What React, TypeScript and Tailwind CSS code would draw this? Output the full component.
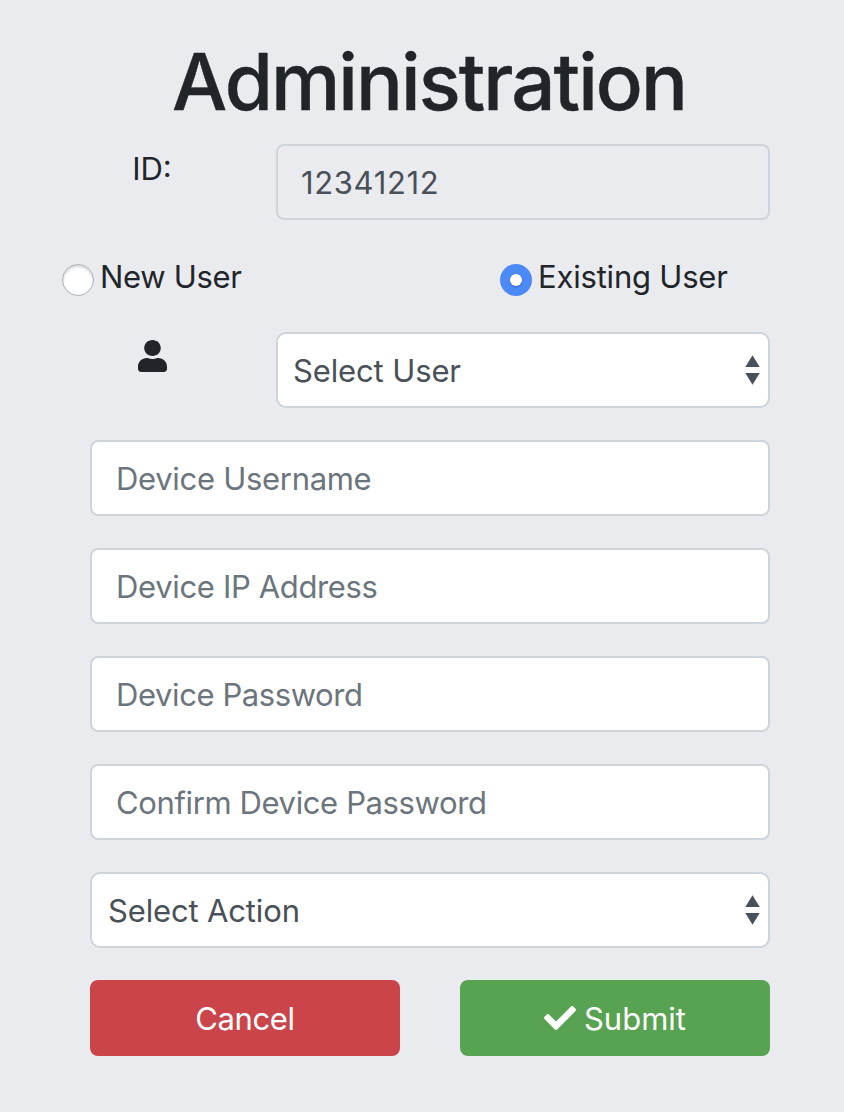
import type { InputHTMLAttributes } from 'react';
import { FaCheck, FaUser } from 'react-icons/fa';

const FIELD =
  'block h-[76px] w-full rounded-lg border-2 border-[#ced4da] px-6 pt-[1px] pb-0 text-[31px] text-[#495057] placeholder:text-[#6c757d] placeholder:opacity-100 outline-none';

function Field({ className = '', ...props }: InputHTMLAttributes<HTMLInputElement> & { className?: string }) {
  return <input className={`${FIELD} ${className}`} {...props} />;
}

function Select({ label, className = '' }: { label: string; className?: string }) {
  return (
    <div className="grid w-full items-center">
      <select
        aria-label={label}
        className={`col-start-1 row-start-1 h-[76px] w-full appearance-none rounded-[10px] border-2 border-[#ced4da] bg-white pt-[1px] pr-14 pb-0 text-[31px] text-[#495057] outline-none ${className}`}
      >
        <option>{label}</option>
      </select>
      <svg
        viewBox="0 0 15 30"
        className="pointer-events-none col-start-1 row-start-1 mr-[10px] h-[30px] w-[15px] justify-self-end fill-[#495057]"
      >
        <path d="M7.5 0.3 14.7 12H0.3ZM0.3 18H14.7L7.5 29.7Z" />
      </svg>
    </div>
  );
}

function Radio({ label, checked = false, className = '' }: { label: string; checked?: boolean; className?: string }) {
  return (
    <label className="flex h-12 items-start">
      <span
        className={
          checked
            ? 'mt-2 flex size-8 items-center justify-center rounded-full bg-[#4c8bf7]'
            : 'mt-2 flex size-8 items-center justify-center rounded-full border border-[#b0b0b2] bg-white shadow-[inset_0_2px_3px_rgba(0,0,0,0.16)]'
        }
      >
        {checked && <span className="size-3 rounded-full bg-white shadow-[0_1px_2px_rgba(0,0,80,0.35)]" />}
        <input type="radio" name="user-type" defaultChecked={checked} className="sr-only" />
      </span>
      <span className={`leading-[42px] ${className}`}>{label}</span>
    </label>
  );
}

export default function App() {
  return (
    <main className="flex h-[1112px] w-[844px] flex-col overflow-hidden bg-[#eaebef] pt-[34px] font-['Inter','Liberation_Sans',sans-serif] text-[31px] leading-[48px] text-[#212529]">
      <h1 className="pl-[14px] text-center text-[78px] leading-[96px] font-medium tracking-[-1.95px] whitespace-nowrap [-webkit-text-stroke:0.4px_#212529]">
        Administration
      </h1>

      <form className="flex flex-col" onSubmit={(event) => event.preventDefault()}>
        <div className="mt-[14px] flex pr-[74px] pl-[90px]">
          <label className="w-[186px] pt-[1px] pr-[62px] text-center">ID:</label>
          <div className="flex-1">
            <Field
              className="bg-[#eaebef] pl-[23px] tracking-[0.65px]"
              defaultValue="12341212"
              disabled
              aria-label="ID"
            />
          </div>
        </div>

        <div className="mt-9 flex pl-[62px]">
          <div className="w-[438px]">
            <Radio label="New User" className="pl-[6px] tracking-[-0.32px]" />
          </div>
          <Radio label="Existing User" checked className="pl-[6px] tracking-[-0.2px]" />
        </div>

        <div className="mt-7 flex pr-[74px] pl-[90px]">
          <div className="flex w-[186px] justify-center pt-2 pr-[61px]">
            <FaUser className="mr-px h-8 w-[29px] shrink-0" preserveAspectRatio="none" />
          </div>
          <div className="flex-1">
            <Select label="Select User" className="pl-[15px] tracking-[-0.13px]" />
          </div>
        </div>

        <div className="mt-8 flex flex-col gap-8 pr-[74px] pl-[90px]">
          <Field className="bg-white tracking-[-0.3px]" placeholder="Device Username" />
          <Field className="bg-white tracking-[-0.34px]" placeholder="Device IP Address" />
          <Field className="bg-white tracking-[-0.41px]" placeholder="Device Password" />
          <Field className="bg-white tracking-[-0.38px]" placeholder="Confirm Device Password" />
          <Select label="Select Action" className="pl-4 tracking-[-0.15px]" />
          <div className="grid grid-cols-2 gap-[60px] text-white">
            <button type="button" className="h-[76px] rounded-lg bg-[#cb444a] pt-[1px] tracking-[-0.4px]">
              Cancel
            </button>
            <button
              type="submit"
              className="flex h-[76px] items-center justify-center gap-2 rounded-lg bg-[#57a351]"
            >
              <FaCheck className="size-8" />
              <span className="pt-[1px]">Submit</span>
            </button>
          </div>
        </div>
      </form>
    </main>
  );
}
